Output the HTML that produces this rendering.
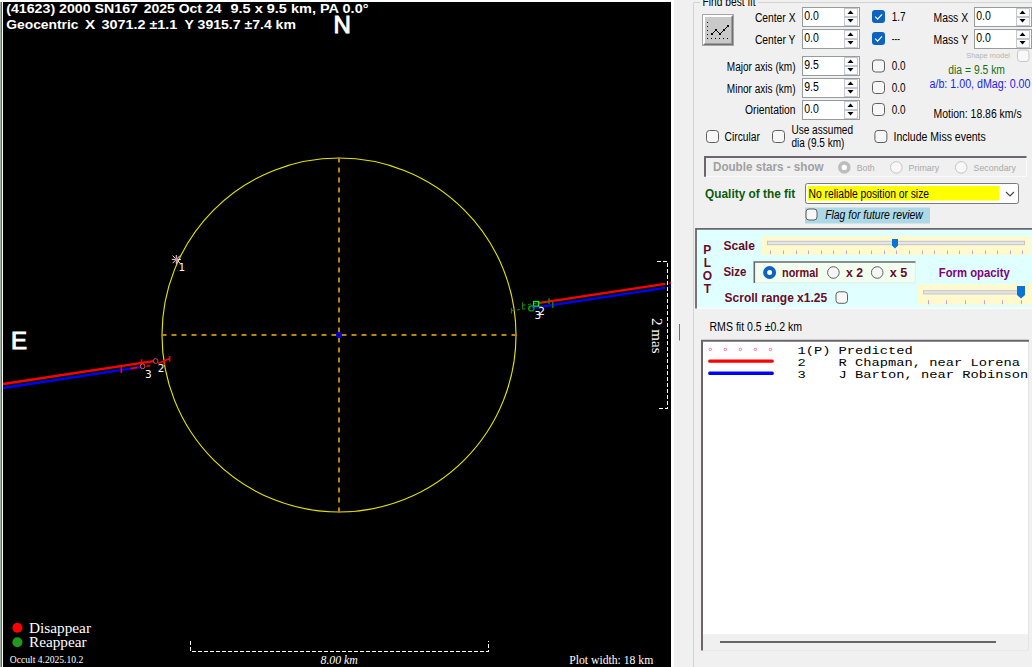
<!DOCTYPE html>
<html lang="en"><head><meta charset="utf-8"><title>Occult - Asteroid occultation plot</title>
<style>html,body{margin:0;padding:0;background:#f0f0f0;overflow:hidden}svg{display:block}text{font-family:'Liberation Sans', Arial, sans-serif;white-space:pre}</style>
</head><body>
<svg width="1032" height="667" viewBox="0 0 1032 667">
<rect x="0" y="0" width="1032" height="667" fill="#f0f0f0"/>
<g id="plot">
<rect x="0" y="0" width="671" height="2" fill="#ffffff"/>
<rect x="3" y="2" width="668" height="665" fill="#000000"/>
<rect x="0" y="2" width="1" height="665" fill="#a3b3a3"/>
<rect x="1" y="2" width="1" height="665" fill="#6a5f6a"/>
<rect x="2" y="2" width="1" height="665" fill="#ffffff"/>
<text x="6.2" y="13.2" font-size="13.4" fill="#fff" font-weight="bold" textLength="131.8" lengthAdjust="spacingAndGlyphs" xml:space="preserve">(41623) 2000 SN167</text>
<text x="143.8" y="13.2" font-size="13.4" fill="#fff" font-weight="bold" textLength="77.6" lengthAdjust="spacingAndGlyphs" xml:space="preserve">2025 Oct 24</text>
<text x="230.5" y="13.2" font-size="13.4" fill="#fff" font-weight="bold" textLength="138" lengthAdjust="spacingAndGlyphs" xml:space="preserve">9.5 x 9.5 km, PA 0.0°</text>
<text x="6.2" y="29.2" font-size="13.4" fill="#fff" font-weight="bold" textLength="72.4" lengthAdjust="spacingAndGlyphs" xml:space="preserve">Geocentric</text>
<text x="85" y="29.2" font-size="13.4" fill="#fff" font-weight="bold" textLength="10.2" lengthAdjust="spacingAndGlyphs" xml:space="preserve">X</text>
<text x="101.4" y="29.2" font-size="13.4" fill="#fff" font-weight="bold" textLength="76" lengthAdjust="spacingAndGlyphs" xml:space="preserve">3071.2 ±1.1</text>
<text x="184.6" y="29.2" font-size="13.4" fill="#fff" font-weight="bold" textLength="111.3" lengthAdjust="spacingAndGlyphs" xml:space="preserve">Y 3915.7 ±7.4 km</text>
<text x="333.4" y="33" font-size="24" fill="#fff" stroke="#fff" stroke-width="1" xml:space="preserve">N</text>
<text x="11" y="349" font-size="24" fill="#fff" stroke="#fff" stroke-width="1" xml:space="preserve">E</text>
<circle cx="339" cy="335" r="177" fill="none" stroke="#e4e400" stroke-width="1.15"/>
<line x1="161.5" y1="335" x2="516.5" y2="335" stroke="#b8860b" stroke-width="2" stroke-dasharray="5 5"/>
<line x1="339" y1="157.5" x2="339" y2="512.5" stroke="#b8860b" stroke-width="2" stroke-dasharray="5 5"/>
<circle cx="339" cy="335" r="2" fill="#000" stroke="#0000ff" stroke-width="2"/>
<g stroke="#088c08" stroke-width="1.1" fill="none">
<path d="M522.5 302.2V308.4 M549 298.4V303.8 M511.4 308V313.6 M552.7 302V307.8"/>
<path d="M522.5 305.3L549 301.3" stroke-dasharray="3 2.5"/>
<path d="M511.4 310.8L552.7 304.6" stroke-dasharray="3 2.5"/>
</g>
<line x1="3" y1="384" x2="153.5" y2="361.04875" stroke="#ff0000" stroke-width="2.3" />
<line x1="3" y1="388" x2="142" y2="366.8025" stroke="#0000ff" stroke-width="2.3" />
<line x1="538" y1="303.2" x2="665" y2="283.8325" stroke="#ff0000" stroke-width="2.3" />
<line x1="532" y1="308.1" x2="665" y2="287.8175" stroke="#0000ff" stroke-width="2.3" />
<line x1="669.6" y1="283.2" x2="671" y2="283" stroke="#ff0000" stroke-width="2.3" />
<line x1="669.6" y1="287.2" x2="671" y2="287" stroke="#0000ff" stroke-width="2.3" />
<g stroke="#ff0000" stroke-width="1.6" fill="none">
<path d="M141.5 359.3V363.5 M158 363.4L169.6 358.6 M164 360V365 M169.6 356V361.6"/>
<path d="M121.3 367V373 M130.5 368.6L137.5 367.5 M146.5 366.2L150.2 365.6"/>
</g>
<circle cx="155.6" cy="361" r="2.4" fill="#000" stroke="#c44" stroke-width="1"/>
<circle cx="142.6" cy="366.3" r="2.4" fill="none" stroke="#e55" stroke-width="1"/>
<text x="145" y="377.6" font-size="10.5" fill="#fff" style="font-family:'DejaVu Sans', 'Liberation Sans', sans-serif" xml:space="preserve">3</text>
<text x="157.8" y="372" font-size="10.5" fill="#fff" style="font-family:'DejaVu Sans', 'Liberation Sans', sans-serif" xml:space="preserve">2</text>
<path d="M549 298.4V303.8 M552.7 302V307.8 M538.6 303L541.4 302.6 M543.6 302.2L546.4 301.8 M539 306.7L542 306.3" fill="none" stroke="#088c08" stroke-width="1.1"/>
<rect x="533.5" y="301.5" width="5" height="4.6" fill="none" stroke="#00ff00" stroke-width="1.2"/>
<circle cx="531.3" cy="308.4" r="2.6" fill="none" stroke="#00a800" stroke-width="1.2"/>
<text x="538.2" y="315" font-size="10.5" fill="#fff" style="font-family:'DejaVu Sans', 'Liberation Sans', sans-serif" xml:space="preserve">2</text>
<text x="534.4" y="319.3" font-size="10.5" fill="#fff" style="font-family:'DejaVu Sans', 'Liberation Sans', sans-serif" xml:space="preserve">3</text>
<g stroke="#fff" stroke-width="0.9">
<path d="M171.8 259.4H181 M176.3 255V263.8 M172.6 255.6L180 263.2 M180 255.6L172.6 263.2"/>
</g>
<circle cx="176.3" cy="259.4" r="1.6" fill="#ff69b4"/>
<text x="178.6" y="271" font-size="10.5" fill="#fff" style="font-family:'DejaVu Sans', 'Liberation Sans', sans-serif" xml:space="preserve">1</text>
<g stroke="#fff" stroke-width="1" fill="none" stroke-dasharray="4 2" shape-rendering="crispEdges">
<path d="M657 261.5H667.5V408.5H657"/>
</g>
<text transform="translate(651.6 318) rotate(90)" font-size="15" fill="#fff" style="font-family:'Liberation Serif', 'Times New Roman', serif" textLength="35.6" lengthAdjust="spacingAndGlyphs">2 mas</text>
<g stroke="#fff" stroke-width="1" fill="none" stroke-dasharray="4 2" shape-rendering="crispEdges">
<path d="M190.5 641V651.5H488.5V641"/>
</g>
<text x="320.5" y="664" font-size="11.7" fill="#fff" font-style="italic" textLength="37.3" lengthAdjust="spacingAndGlyphs" style="font-family:'Liberation Serif', 'Times New Roman', serif" xml:space="preserve">8.00 km</text>
<text x="569.3" y="664" font-size="11.7" fill="#fff" textLength="84" lengthAdjust="spacingAndGlyphs" style="font-family:'Liberation Serif', 'Times New Roman', serif" xml:space="preserve">Plot width: 18 km</text>
<circle cx="17.4" cy="627.7" r="5" fill="#ff0000"/>
<circle cx="17.4" cy="642.3" r="5" fill="#1f9a1f"/>
<text x="29" y="632.5" font-size="15.2" fill="#fff" textLength="62" lengthAdjust="spacingAndGlyphs" style="font-family:'Liberation Serif', 'Times New Roman', serif" xml:space="preserve">Disappear</text>
<text x="29" y="646.8" font-size="15.2" fill="#fff" textLength="57.5" lengthAdjust="spacingAndGlyphs" style="font-family:'Liberation Serif', 'Times New Roman', serif" xml:space="preserve">Reappear</text>
<text x="9.8" y="662.8" font-size="9.6" fill="#fff" textLength="73.5" lengthAdjust="spacingAndGlyphs" style="font-family:'Liberation Serif', 'Times New Roman', serif" xml:space="preserve">Occult 4.2025.10.2</text>
</g>
<g id="panel">
<rect x="671" y="0" width="3" height="667" fill="#ffffff"/>
<line x1="679.5" y1="324" x2="679.5" y2="340.5" stroke="#707070" stroke-width="1" />
<path d="M1032 2.5H693.5V667" fill="none" stroke="#d4d4d4" stroke-width="1"/>
<rect x="700" y="0" width="58" height="6" fill="#f0f0f0"/>
<text x="702.6" y="6.4" font-size="12" fill="#000" textLength="52.9" lengthAdjust="spacingAndGlyphs" xml:space="preserve">Find best fit</text>
<rect x="702" y="14" width="32" height="32" fill="#ffffff"/>
<rect x="702.5" y="14.5" width="31" height="31" fill="none" stroke="#a6a6a6" stroke-width="1"/>
<path d="M733 15V45H703L704 44H732V16Z" fill="#707070"/>
<path d="M732 16V44H704L705 43H731V17Z" fill="#9c9c9c"/>
<rect x="705" y="17" width="26" height="26" fill="#c9c9c9"/>
<g fill="#000" shape-rendering="crispEdges">
<rect x="707" y="22" width="1" height="1" fill="#000"/>
<rect x="707" y="26" width="1" height="1" fill="#000"/>
<rect x="707" y="30" width="1" height="1" fill="#000"/>
<rect x="707" y="34" width="1" height="1" fill="#000"/>
<rect x="707" y="38" width="1" height="1" fill="#000"/>
<rect x="711" y="38" width="1" height="1" fill="#000"/>
<rect x="715" y="38" width="1" height="1" fill="#000"/>
<rect x="719" y="38" width="1" height="1" fill="#000"/>
<rect x="723" y="38" width="1" height="1" fill="#000"/>
<rect x="727" y="38" width="1" height="1" fill="#000"/>
</g>
<path d="M712 34L716 30L720 34L724 30L728 26" fill="none" stroke="#000" stroke-width="1"/>
<rect x="711" y="33" width="2" height="2" fill="#000"/>
<rect x="715" y="29" width="2" height="2" fill="#000"/>
<rect x="719" y="33" width="2" height="2" fill="#000"/>
<rect x="723" y="29" width="2" height="2" fill="#000"/>
<rect x="727" y="25" width="2" height="2" fill="#000"/>
<text x="754.9" y="22.0" font-size="12" fill="#000" textLength="40.6" lengthAdjust="spacingAndGlyphs" xml:space="preserve">Center X</text>
<text x="754.9" y="44.1" font-size="12" fill="#000" textLength="40.6" lengthAdjust="spacingAndGlyphs" xml:space="preserve">Center Y</text>
<text x="726.8" y="70.5" font-size="12" fill="#000" textLength="68.7" lengthAdjust="spacingAndGlyphs" xml:space="preserve">Major axis (km)</text>
<text x="726.8" y="93.0" font-size="12" fill="#000" textLength="68.7" lengthAdjust="spacingAndGlyphs" xml:space="preserve">Minor axis (km)</text>
<text x="745.1" y="114.1" font-size="12" fill="#000" textLength="50.4" lengthAdjust="spacingAndGlyphs" xml:space="preserve">Orientation</text>
<rect x="802.5" y="7.5" width="57" height="19" fill="#ffffff" stroke="#969c9e" stroke-width="1"/>
<text x="804.2" y="20.0" font-size="12" fill="#000" textLength="14.6" lengthAdjust="spacingAndGlyphs" xml:space="preserve">0.0</text>
<rect x="844.5" y="8.5" width="13" height="8" fill="#fbfbfb" stroke="#c4c8ce" stroke-width="1"/>
<rect x="844.5" y="17.5" width="13" height="8" fill="#fbfbfb" stroke="#c4c8ce" stroke-width="1"/>
<path d="M850.5 10.4L853.5 14H847.5Z" fill="#000"/>
<path d="M850.5 22.6L853.5 19H847.5Z" fill="#000"/>
<rect x="802.5" y="29.5" width="57" height="19" fill="#ffffff" stroke="#969c9e" stroke-width="1"/>
<text x="804.2" y="42.0" font-size="12" fill="#000" textLength="14.6" lengthAdjust="spacingAndGlyphs" xml:space="preserve">0.0</text>
<rect x="844.5" y="30.5" width="13" height="8" fill="#fbfbfb" stroke="#c4c8ce" stroke-width="1"/>
<rect x="844.5" y="39.5" width="13" height="8" fill="#fbfbfb" stroke="#c4c8ce" stroke-width="1"/>
<path d="M850.5 32.4L853.5 36H847.5Z" fill="#000"/>
<path d="M850.5 44.6L853.5 41H847.5Z" fill="#000"/>
<rect x="802.5" y="56.5" width="57" height="19" fill="#ffffff" stroke="#969c9e" stroke-width="1"/>
<text x="804.2" y="69.0" font-size="12" fill="#000" textLength="14.6" lengthAdjust="spacingAndGlyphs" xml:space="preserve">9.5</text>
<rect x="844.5" y="57.5" width="13" height="8" fill="#fbfbfb" stroke="#c4c8ce" stroke-width="1"/>
<rect x="844.5" y="66.5" width="13" height="8" fill="#fbfbfb" stroke="#c4c8ce" stroke-width="1"/>
<path d="M850.5 59.4L853.5 63H847.5Z" fill="#000"/>
<path d="M850.5 71.6L853.5 68H847.5Z" fill="#000"/>
<rect x="802.5" y="78.5" width="57" height="19" fill="#ffffff" stroke="#969c9e" stroke-width="1"/>
<text x="804.2" y="91.0" font-size="12" fill="#000" textLength="14.6" lengthAdjust="spacingAndGlyphs" xml:space="preserve">9.5</text>
<rect x="844.5" y="79.5" width="13" height="8" fill="#fbfbfb" stroke="#c4c8ce" stroke-width="1"/>
<rect x="844.5" y="88.5" width="13" height="8" fill="#fbfbfb" stroke="#c4c8ce" stroke-width="1"/>
<path d="M850.5 81.4L853.5 85H847.5Z" fill="#000"/>
<path d="M850.5 93.6L853.5 90H847.5Z" fill="#000"/>
<rect x="802.5" y="100.5" width="57" height="19" fill="#ffffff" stroke="#969c9e" stroke-width="1"/>
<text x="804.2" y="113.0" font-size="12" fill="#000" textLength="14.6" lengthAdjust="spacingAndGlyphs" xml:space="preserve">0.0</text>
<rect x="844.5" y="101.5" width="13" height="8" fill="#fbfbfb" stroke="#c4c8ce" stroke-width="1"/>
<rect x="844.5" y="110.5" width="13" height="8" fill="#fbfbfb" stroke="#c4c8ce" stroke-width="1"/>
<path d="M850.5 103.4L853.5 107H847.5Z" fill="#000"/>
<path d="M850.5 115.6L853.5 112H847.5Z" fill="#000"/>
<rect x="974.5" y="7.5" width="57" height="19" fill="#ffffff" stroke="#969c9e" stroke-width="1"/>
<text x="976.2" y="20.0" font-size="12" fill="#000" textLength="14.6" lengthAdjust="spacingAndGlyphs" xml:space="preserve">0.0</text>
<rect x="1016.5" y="8.5" width="13" height="8" fill="#fbfbfb" stroke="#c4c8ce" stroke-width="1"/>
<rect x="1016.5" y="17.5" width="13" height="8" fill="#fbfbfb" stroke="#c4c8ce" stroke-width="1"/>
<path d="M1022.5 10.4L1025.5 14H1019.5Z" fill="#000"/>
<path d="M1022.5 22.6L1025.5 19H1019.5Z" fill="#000"/>
<rect x="974.5" y="29.5" width="57" height="19" fill="#ffffff" stroke="#969c9e" stroke-width="1"/>
<text x="976.2" y="42.0" font-size="12" fill="#000" textLength="14.6" lengthAdjust="spacingAndGlyphs" xml:space="preserve">0.0</text>
<rect x="1016.5" y="30.5" width="13" height="8" fill="#fbfbfb" stroke="#c4c8ce" stroke-width="1"/>
<rect x="1016.5" y="39.5" width="13" height="8" fill="#fbfbfb" stroke="#c4c8ce" stroke-width="1"/>
<path d="M1022.5 32.4L1025.5 36H1019.5Z" fill="#000"/>
<path d="M1022.5 44.6L1025.5 41H1019.5Z" fill="#000"/>
<rect x="872" y="10" width="13" height="13" fill="#0f62be" rx="3"/>
<path d="M875.2 16.7L877.6 19.1L882 14.4" fill="none" stroke="#fff" stroke-width="1.2"/>
<text x="891.8" y="20.8" font-size="12" fill="#000" textLength="13.8" lengthAdjust="spacingAndGlyphs" xml:space="preserve">1.7</text>
<rect x="872" y="32" width="13" height="13" fill="#0f62be" rx="3"/>
<path d="M875.2 38.7L877.6 41.1L882 36.4" fill="none" stroke="#fff" stroke-width="1.2"/>
<text x="891.8" y="43.2" font-size="12" fill="#000" textLength="8" lengthAdjust="spacingAndGlyphs" xml:space="preserve">---</text>
<rect x="872.5" y="60.0" width="12" height="12" fill="#f7f7f7" stroke="#5e5e5e" stroke-width="1" rx="3"/>
<text x="891.8" y="70.1" font-size="12" fill="#000" textLength="13.8" lengthAdjust="spacingAndGlyphs" xml:space="preserve">0.0</text>
<rect x="872.5" y="81.5" width="12" height="12" fill="#f7f7f7" stroke="#5e5e5e" stroke-width="1" rx="3"/>
<text x="891.8" y="92.3" font-size="12" fill="#000" textLength="13.8" lengthAdjust="spacingAndGlyphs" xml:space="preserve">0.0</text>
<rect x="872.5" y="103.5" width="12" height="12" fill="#f7f7f7" stroke="#5e5e5e" stroke-width="1" rx="3"/>
<text x="891.8" y="114.1" font-size="12" fill="#000" textLength="13.8" lengthAdjust="spacingAndGlyphs" xml:space="preserve">0.0</text>
<text x="933.5" y="22.2" font-size="12" fill="#000" textLength="34.6" lengthAdjust="spacingAndGlyphs" xml:space="preserve">Mass X</text>
<text x="933.5" y="44.1" font-size="12" fill="#000" textLength="34.6" lengthAdjust="spacingAndGlyphs" xml:space="preserve">Mass Y</text>
<text x="966.2" y="57.5" font-size="7.7" fill="#b4b4b4" textLength="43.8" lengthAdjust="spacingAndGlyphs" xml:space="preserve">Shape model</text>
<rect x="1017.5" y="50.0" width="11.5" height="11.5" fill="#f8f8f8" stroke="#c8c8c8" stroke-width="1" rx="3"/>
<text x="948.3" y="74.2" font-size="12" fill="#1a6e1a" textLength="56.7" lengthAdjust="spacingAndGlyphs" xml:space="preserve">dia = 9.5 km</text>
<text x="929.5" y="88.1" font-size="12" fill="#2222ee" textLength="101" lengthAdjust="spacingAndGlyphs" xml:space="preserve">a/b: 1.00, dMag: 0.00</text>
<text x="933.5" y="117.9" font-size="12" fill="#000" textLength="88.1" lengthAdjust="spacingAndGlyphs" xml:space="preserve">Motion: 18.86 km/s</text>
<rect x="706.5" y="130.5" width="12" height="12" fill="#f7f7f7" stroke="#5e5e5e" stroke-width="1" rx="3"/>
<text x="724.6" y="141.1" font-size="12" fill="#000" textLength="35.3" lengthAdjust="spacingAndGlyphs" xml:space="preserve">Circular</text>
<rect x="772.5" y="130.5" width="12" height="12" fill="#f7f7f7" stroke="#5e5e5e" stroke-width="1" rx="3"/>
<text x="791.4" y="134.3" font-size="12" fill="#000" textLength="61.6" lengthAdjust="spacingAndGlyphs" xml:space="preserve">Use assumed</text>
<text x="791.4" y="147.1" font-size="12" fill="#000" textLength="53" lengthAdjust="spacingAndGlyphs" xml:space="preserve">dia (9.5 km)</text>
<rect x="874.9" y="130.5" width="12" height="12" fill="#f7f7f7" stroke="#5e5e5e" stroke-width="1" rx="3"/>
<text x="893.5" y="141.0" font-size="12" fill="#000" textLength="92.3" lengthAdjust="spacingAndGlyphs" xml:space="preserve">Include Miss events</text>
<path d="M705 176.8V157H1026.5" fill="none" stroke="#6c666c" stroke-width="2"/>
<path d="M706 176.5H1026.5V158" fill="none" stroke="#fafafa" stroke-width="1"/>
<text x="713" y="170.8" font-size="12" fill="#a0a0a0" font-weight="bold" textLength="110.6" lengthAdjust="spacingAndGlyphs" xml:space="preserve">Double stars - show</text>
<circle cx="844.3" cy="167.4" r="4.5" fill="#fff" stroke="#bdbdbd" stroke-width="3.6"/>
<text x="856.7" y="171.4" font-size="9" fill="#a8a8a8" textLength="18" lengthAdjust="spacingAndGlyphs" xml:space="preserve">Both</text>
<circle cx="896.3" cy="167.4" r="5.8" fill="#f8f8f8" stroke="#c4c4c4" stroke-width="1"/>
<text x="908.6" y="171.4" font-size="9" fill="#a8a8a8" textLength="30.6" lengthAdjust="spacingAndGlyphs" xml:space="preserve">Primary</text>
<circle cx="961.2" cy="167.4" r="5.8" fill="#f8f8f8" stroke="#c4c4c4" stroke-width="1"/>
<text x="973.5" y="171.4" font-size="9" fill="#a8a8a8" textLength="42.5" lengthAdjust="spacingAndGlyphs" xml:space="preserve">Secondary</text>
<text x="705.1" y="198.0" font-size="12" fill="#0b5a0b" font-weight="bold" textLength="90.1" lengthAdjust="spacingAndGlyphs" xml:space="preserve">Quality of the fit</text>
<rect x="805.5" y="183.5" width="213" height="20" fill="#ffffff" stroke="#7a7a7a" stroke-width="1" rx="2"/>
<rect x="808" y="186" width="191" height="14.5" fill="#ffff00"/>
<text x="808.6" y="197.5" font-size="12" fill="#000" textLength="120.4" lengthAdjust="spacingAndGlyphs" xml:space="preserve">No reliable position or size</text>
<path d="M1006 192L1010 196L1014 192" fill="none" stroke="#444" stroke-width="1.1"/>
<rect x="805" y="207.5" width="125" height="16" fill="#add8e6"/>
<rect x="806.0" y="209.0" width="11" height="11" fill="#f7f7f7" stroke="#5e5e5e" stroke-width="1" rx="3"/>
<text x="825.2" y="219.2" font-size="12" fill="#000" font-style="italic" textLength="97.6" lengthAdjust="spacingAndGlyphs" xml:space="preserve">Flag for future review</text>
<rect x="696" y="228" width="336" height="80" fill="#e0ffff"/>
<path d="M696 308.5V228.9H1032" fill="none" stroke="#6c666c" stroke-width="1.8"/>
<path d="M697 308.2H1032" fill="none" stroke="#ffffff" stroke-width="1"/>
<text x="707.3" y="253.6" font-size="12" fill="#6a0a28" font-weight="bold" text-anchor="middle" xml:space="preserve">P</text>
<text x="707.3" y="267.0" font-size="12" fill="#6a0a28" font-weight="bold" text-anchor="middle" xml:space="preserve">L</text>
<text x="707.3" y="280.3" font-size="12" fill="#6a0a28" font-weight="bold" text-anchor="middle" xml:space="preserve">O</text>
<text x="707.3" y="293.2" font-size="12" fill="#6a0a28" font-weight="bold" text-anchor="middle" xml:space="preserve">T</text>
<text x="723.4" y="250.0" font-size="12" fill="#6a0a28" font-weight="bold" textLength="31.5" lengthAdjust="spacingAndGlyphs" xml:space="preserve">Scale</text>
<text x="723.4" y="276.1" font-size="12" fill="#6a0a28" font-weight="bold" textLength="23" lengthAdjust="spacingAndGlyphs" xml:space="preserve">Size</text>
<text x="724.6" y="301.5" font-size="12" fill="#6a0a28" font-weight="bold" textLength="102.5" lengthAdjust="spacingAndGlyphs" xml:space="preserve">Scroll range x1.25</text>
<rect x="836.0" y="291.8" width="11.5" height="11.5" fill="#f7f7f7" stroke="#5e5e5e" stroke-width="1" rx="3"/>
<rect x="762" y="236.2" width="268.5" height="18.7" fill="#fffacd"/>
<rect x="767.5" y="241.3" width="257" height="3.4" fill="#e4e4ee" stroke="#c4c4c8" stroke-width="1"/>
<line x1="770.5" y1="250.5" x2="770.5" y2="254" stroke="#c8a0c8" stroke-width="1" />
<line x1="783.5" y1="250.5" x2="783.5" y2="254" stroke="#c8a0c8" stroke-width="1" />
<line x1="796.5" y1="250.5" x2="796.5" y2="254" stroke="#c8a0c8" stroke-width="1" />
<line x1="808.5" y1="250.5" x2="808.5" y2="254" stroke="#c8a0c8" stroke-width="1" />
<line x1="821.5" y1="250.5" x2="821.5" y2="254" stroke="#c8a0c8" stroke-width="1" />
<line x1="833.5" y1="250.5" x2="833.5" y2="254" stroke="#c8a0c8" stroke-width="1" />
<line x1="846.5" y1="250.5" x2="846.5" y2="254" stroke="#c8a0c8" stroke-width="1" />
<line x1="859.5" y1="250.5" x2="859.5" y2="254" stroke="#c8a0c8" stroke-width="1" />
<line x1="871.5" y1="250.5" x2="871.5" y2="254" stroke="#c8a0c8" stroke-width="1" />
<line x1="884.5" y1="250.5" x2="884.5" y2="254" stroke="#c8a0c8" stroke-width="1" />
<line x1="896.5" y1="250.5" x2="896.5" y2="254" stroke="#c8a0c8" stroke-width="1" />
<line x1="909.5" y1="250.5" x2="909.5" y2="254" stroke="#c8a0c8" stroke-width="1" />
<line x1="922.5" y1="250.5" x2="922.5" y2="254" stroke="#c8a0c8" stroke-width="1" />
<line x1="934.5" y1="250.5" x2="934.5" y2="254" stroke="#c8a0c8" stroke-width="1" />
<line x1="947.5" y1="250.5" x2="947.5" y2="254" stroke="#c8a0c8" stroke-width="1" />
<line x1="959.5" y1="250.5" x2="959.5" y2="254" stroke="#c8a0c8" stroke-width="1" />
<line x1="972.5" y1="250.5" x2="972.5" y2="254" stroke="#c8a0c8" stroke-width="1" />
<line x1="985.5" y1="250.5" x2="985.5" y2="254" stroke="#c8a0c8" stroke-width="1" />
<line x1="997.5" y1="250.5" x2="997.5" y2="254" stroke="#c8a0c8" stroke-width="1" />
<line x1="1010.5" y1="250.5" x2="1010.5" y2="254" stroke="#c8a0c8" stroke-width="1" />
<line x1="1022.5" y1="250.5" x2="1022.5" y2="254" stroke="#c8a0c8" stroke-width="1" />
<path d="M892 239H898V245.5L895 248.6L892 245.5Z" fill="#0a74d6"/>
<rect x="754" y="261.5" width="161.5" height="21.5" fill="#f0fff0"/>
<path d="M754.3 283V262H915.5" fill="none" stroke="#6c666c" stroke-width="1.6"/>
<path d="M755 282.8H915.3V263" fill="none" stroke="#e8e8e8" stroke-width="1"/>
<circle cx="769.6" cy="272.5" r="4.5" fill="#fff" stroke="#0f62be" stroke-width="4"/>
<text x="782" y="276.7" font-size="12" fill="#6a0a28" font-weight="bold" textLength="36.3" lengthAdjust="spacingAndGlyphs" xml:space="preserve">normal</text>
<circle cx="833.4" cy="272.5" r="5.8" fill="#f6f6f6" stroke="#606060" stroke-width="1"/>
<text x="846" y="276.7" font-size="12" fill="#6a0a28" font-weight="bold" textLength="17" lengthAdjust="spacingAndGlyphs" xml:space="preserve">x 2</text>
<circle cx="877.2" cy="272.5" r="5.8" fill="#f6f6f6" stroke="#606060" stroke-width="1"/>
<text x="889.7" y="276.7" font-size="12" fill="#6a0a28" font-weight="bold" textLength="17.6" lengthAdjust="spacingAndGlyphs" xml:space="preserve">x 5</text>
<text x="938.8" y="276.7" font-size="12" fill="#800080" font-weight="bold" textLength="70.9" lengthAdjust="spacingAndGlyphs" xml:space="preserve">Form opacity</text>
<rect x="917" y="284.2" width="115" height="20.4" fill="#fffacd"/>
<rect x="923.5" y="290.7" width="97" height="3.2" fill="#e4e4ee" stroke="#c4c4c8" stroke-width="1"/>
<line x1="928.5" y1="300.3" x2="928.5" y2="304.2" stroke="#c8a0c8" stroke-width="1" />
<line x1="946.5" y1="300.3" x2="946.5" y2="304.2" stroke="#c8a0c8" stroke-width="1" />
<line x1="965.5" y1="300.3" x2="965.5" y2="304.2" stroke="#c8a0c8" stroke-width="1" />
<line x1="984.5" y1="300.3" x2="984.5" y2="304.2" stroke="#c8a0c8" stroke-width="1" />
<line x1="1002.5" y1="300.3" x2="1002.5" y2="304.2" stroke="#c8a0c8" stroke-width="1" />
<line x1="1021.5" y1="300.3" x2="1021.5" y2="304.2" stroke="#c8a0c8" stroke-width="1" />
<path d="M1017 286H1025V295L1021 298.4L1017 295Z" fill="#0a74d6"/>
<text x="709.5" y="331.2" font-size="12" fill="#000" textLength="92.6" lengthAdjust="spacingAndGlyphs" xml:space="preserve">RMS fit 0.5 ±0.2 km</text>
<rect x="702" y="341" width="326" height="309.5" fill="#ffffff"/>
<path d="M702 650.5V340.8H1029" fill="none" stroke="#6c666c" stroke-width="2"/>
<path d="M703 650.3H1028.5V342" fill="none" stroke="#e4e4e4" stroke-width="1"/>
<rect x="703" y="634" width="325" height="16" fill="#f0f0f0"/>
<rect x="720" y="641" width="276" height="2" fill="#666666"/>
<circle cx="710.3" cy="349.4" r="1.25" fill="#fff" stroke="#ff5fa8" stroke-width="0.9"/>
<circle cx="725.3" cy="349.4" r="1.25" fill="#fff" stroke="#ff5fa8" stroke-width="0.9"/>
<circle cx="740.4" cy="349.4" r="1.25" fill="#fff" stroke="#ff5fa8" stroke-width="0.9"/>
<circle cx="755.4" cy="349.4" r="1.25" fill="#fff" stroke="#ff5fa8" stroke-width="0.9"/>
<circle cx="770.4" cy="349.4" r="1.25" fill="#fff" stroke="#ff5fa8" stroke-width="0.9"/>
<rect x="708.2" y="359.4" width="65.6" height="3.4" fill="#ff0000" rx="1.5"/>
<rect x="708.2" y="371.6" width="65.6" height="3.4" fill="#0000ff" rx="1.5"/>
<text transform="translate(797.4 354) scale(1 0.86)" font-size="13.75" fill="#000" style="font-family:'Liberation Mono', 'Courier New', monospace" xml:space="preserve">1(P) Predicted</text>
<text transform="translate(797.4 366) scale(1 0.86)" font-size="13.75" fill="#000" style="font-family:'Liberation Mono', 'Courier New', monospace" xml:space="preserve">2    R Chapman, near Lorena</text>
<text transform="translate(797.4 378) scale(1 0.86)" font-size="13.75" fill="#000" style="font-family:'Liberation Mono', 'Courier New', monospace" xml:space="preserve">3    J Barton, near Robinson</text>
</g>
</svg>
</body></html>
